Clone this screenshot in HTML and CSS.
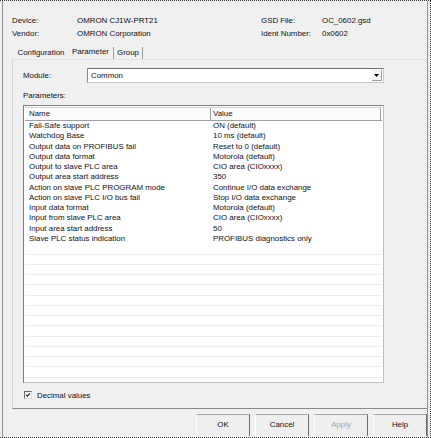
FILE: index.html
```html
<!DOCTYPE html>
<html>
<head>
<meta charset="utf-8">
<link rel="stylesheet" href="styles.css">
</head>
<body>
<div class="frame">
  <div class="window">
    <div class="info">
      <span>Device:</span><span>OMRON CJ1W-PRT21</span><span>GSD File:</span><span>OC_0602.gsd</span>
      <span>Vendor:</span><span>OMRON Corporation</span><span>Ident Number:</span><span>0x0602</span>
    </div>
    <div class="tabs">
      <div class="tab t1">Configuration</div>
      <div class="tab t2 active">Parameter</div>
      <div class="tab t3">Group</div>
    </div>
    <div class="panel">
      <div class="module-row">
        <span class="module-label">Module:</span>
        <div class="combo">
          <span class="combo-text">Common</span>
          <span class="combo-btn"><svg width="5" height="3" viewBox="0 0 5 3"><path d="M0 0H5L2.5 3Z" fill="#000"/></svg></span>
        </div>
      </div>
      <div class="params-label">Parameters:</div>
      <div class="list">
        <div class="list-head">
          <div class="hcell hname">Name</div>
          <div class="hcell hvalue">Value</div>
        </div>
        <div class="list-body">
          <div class="row"><span class="cname">Fail-Safe support</span><span class="cval">ON (default)</span></div>
          <div class="row"><span class="cname">Watchdog Base</span><span class="cval">10 ms (default)</span></div>
          <div class="row"><span class="cname">Output data on PROFIBUS fail</span><span class="cval">Reset to 0 (default)</span></div>
          <div class="row"><span class="cname">Output data format</span><span class="cval">Motorola (default)</span></div>
          <div class="row"><span class="cname">Output to slave PLC area</span><span class="cval">CIO area (CIOxxxx)</span></div>
          <div class="row"><span class="cname">Output area start address</span><span class="cval">350</span></div>
          <div class="row"><span class="cname">Action on slave PLC PROGRAM mode</span><span class="cval">Continue I/O data exchange</span></div>
          <div class="row"><span class="cname">Action on slave PLC I/O bus fail</span><span class="cval">Stop I/O data exchange</span></div>
          <div class="row"><span class="cname">Input data format</span><span class="cval">Motorola (default)</span></div>
          <div class="row"><span class="cname">Input from slave PLC area</span><span class="cval">CIO area (CIOxxxx)</span></div>
          <div class="row"><span class="cname">Input area start address</span><span class="cval">50</span></div>
          <div class="row"><span class="cname">Slave PLC status indication</span><span class="cval">PROFIBUS diagnostics only</span></div>
        </div>
      </div>
      <div class="check-row">
        <span class="checkbox"><svg width="8" height="8" viewBox="0 0 8 8"><path d="M1.5 3.8L3.2 5.6L6.6 1.8" stroke="#111" stroke-width="1.4" fill="none"/></svg></span>
        <span>Decimal values</span>
      </div>
    </div>
    <div class="buttons">
      <div class="btn">OK</div>
      <div class="btn">Cancel</div>
      <div class="btn disabled">Apply</div>
      <div class="btn">Help</div>
    </div>
  </div>
</div>
</body>
</html>
```
FILE: styles.css
```css
html, body {
  margin: 0;
  padding: 0;
  background: #f0f0f0;
}
body {
  font-family: "Liberation Sans", Arial, sans-serif;
  font-size: 7.9px;
  color: #111;
}
.frame {
  width: 431px;
  height: 438px;
  box-sizing: border-box;
  border-top: 1px dotted #333;
  border-right: 1px dotted #333;
  border-bottom: 1px dotted #333;
  overflow: hidden;
}
.window {
  margin-left: 2px;
  margin-right: 2px;
  height: 100%;
  border-left: 1px solid #8f8f8f;
  border-right: 1px solid #8f8f8f;
  box-sizing: border-box;
  display: flex;
  flex-direction: column;
}
.info {
  display: grid;
  grid-template-columns: 65px 184px 61px auto;
  line-height: 13px;
  padding-left: 9px;
  margin-top: 13px;
}
.tabs {
  display: flex;
  margin-top: 7px;
  margin-left: 11px;
  height: 12px;
}
.tab {
  height: 12px;
  line-height: 12px;
  text-align: center;
  box-sizing: border-box;
}
.t1 { width: 54px; }
.t2 { width: 46px; border-right: 1px solid #9a9a9a; line-height: 10px; }
.t3 { width: 29px; border-right: 1px solid #9a9a9a; }
.panel {
  margin-left: 9px;
  border-left: 1px solid #d4d4d4;
  border-top: 1px solid #e2e2e2;
  border-bottom: 1px solid #8a8a8a;
  padding: 8px 0 9px 10px;
}
.module-row {
  display: flex;
  align-items: center;
  height: 15px;
}
.module-label {
  width: 64px;
}
.combo {
  width: 297px;
  height: 15px;
  box-sizing: border-box;
  background: #fff;
  border: 1px solid #8c8c8c;
  border-top-color: #6f6f6f;
  border-right-color: #c8c8c8;
  border-bottom-color: #c8c8c8;
  display: flex;
  align-items: center;
  justify-content: space-between;
}
.combo-text {
  padding-left: 3px;
}
.combo-btn {
  width: 10px;
  height: 11px;
  margin-right: 1px;
  display: flex;
  align-items: center;
  justify-content: center;
  border-right: 1px solid #a0a0a0;
  border-bottom: 1px solid #a0a0a0;
  box-sizing: border-box;
  background: #f6f6f6;
}
.params-label {
  line-height: 12px;
  margin-top: 7px;
}
.list {
  margin-top: 3px;
  width: 361px;
  height: 278px;
  box-sizing: border-box;
  background: #fff;
  border: 1px solid #7f7f7f;
  border-right-color: #c0c0c0;
  border-bottom-color: #c0c0c0;
  padding: 1px;
  display: flex;
  flex-direction: column;
}
.list-head {
  display: flex;
  height: 14px;
  flex: none;
  box-sizing: border-box;
  border-top: 1px solid #d0d0d0;
  border-bottom: 1px solid #a0a0a0;
}
.hcell {
  line-height: 12px;
  box-sizing: border-box;
  border-right: 1px solid #a0a0a0;
  background: #fcfcfc;
}
.hname {
  width: 186px;
  padding-left: 4px;
}
.hvalue {
  width: 170px;
  padding-left: 2px;
}
.list-body {
  flex: 1;
  background-image: repeating-linear-gradient(to bottom, transparent 0, transparent 9.27px, #ededed 9.27px, #ededed 10.27px);
}
.row {
  display: flex;
  height: 10.27px;
  line-height: 10.27px;
  background: #fff;
  white-space: nowrap;
}
.cname {
  width: 182px;
  padding-left: 4px;
}
.cval {
  padding-left: 2px;
}
.check-row {
  display: flex;
  align-items: center;
  margin-top: 8px;
  height: 8px;
  padding-left: 1px;
}
.checkbox {
  width: 8px;
  height: 8px;
  box-sizing: border-box;
  border: 1px solid #6a6a6a;
  border-right-color: #d8d8d8;
  border-bottom-color: #d8d8d8;
  background: #fff;
  display: flex;
  align-items: center;
  justify-content: center;
  margin-right: 5px;
}
.checkbox svg {
  width: 6px;
  height: 6px;
}
.buttons {
  display: flex;
  justify-content: flex-end;
  gap: 5px;
  margin-top: 5px;
}
.btn {
  width: 54px;
  height: 22px;
  box-sizing: border-box;
  border-top: 1px solid #a8a8a8;
  border-left: 1px solid #ffffff;
  border-right: 1px solid #6a6a6a;
  background: #efefef;
  text-align: center;
  line-height: 20px;
}
.btn.disabled {
  color: #a3a3a3;
}
```
